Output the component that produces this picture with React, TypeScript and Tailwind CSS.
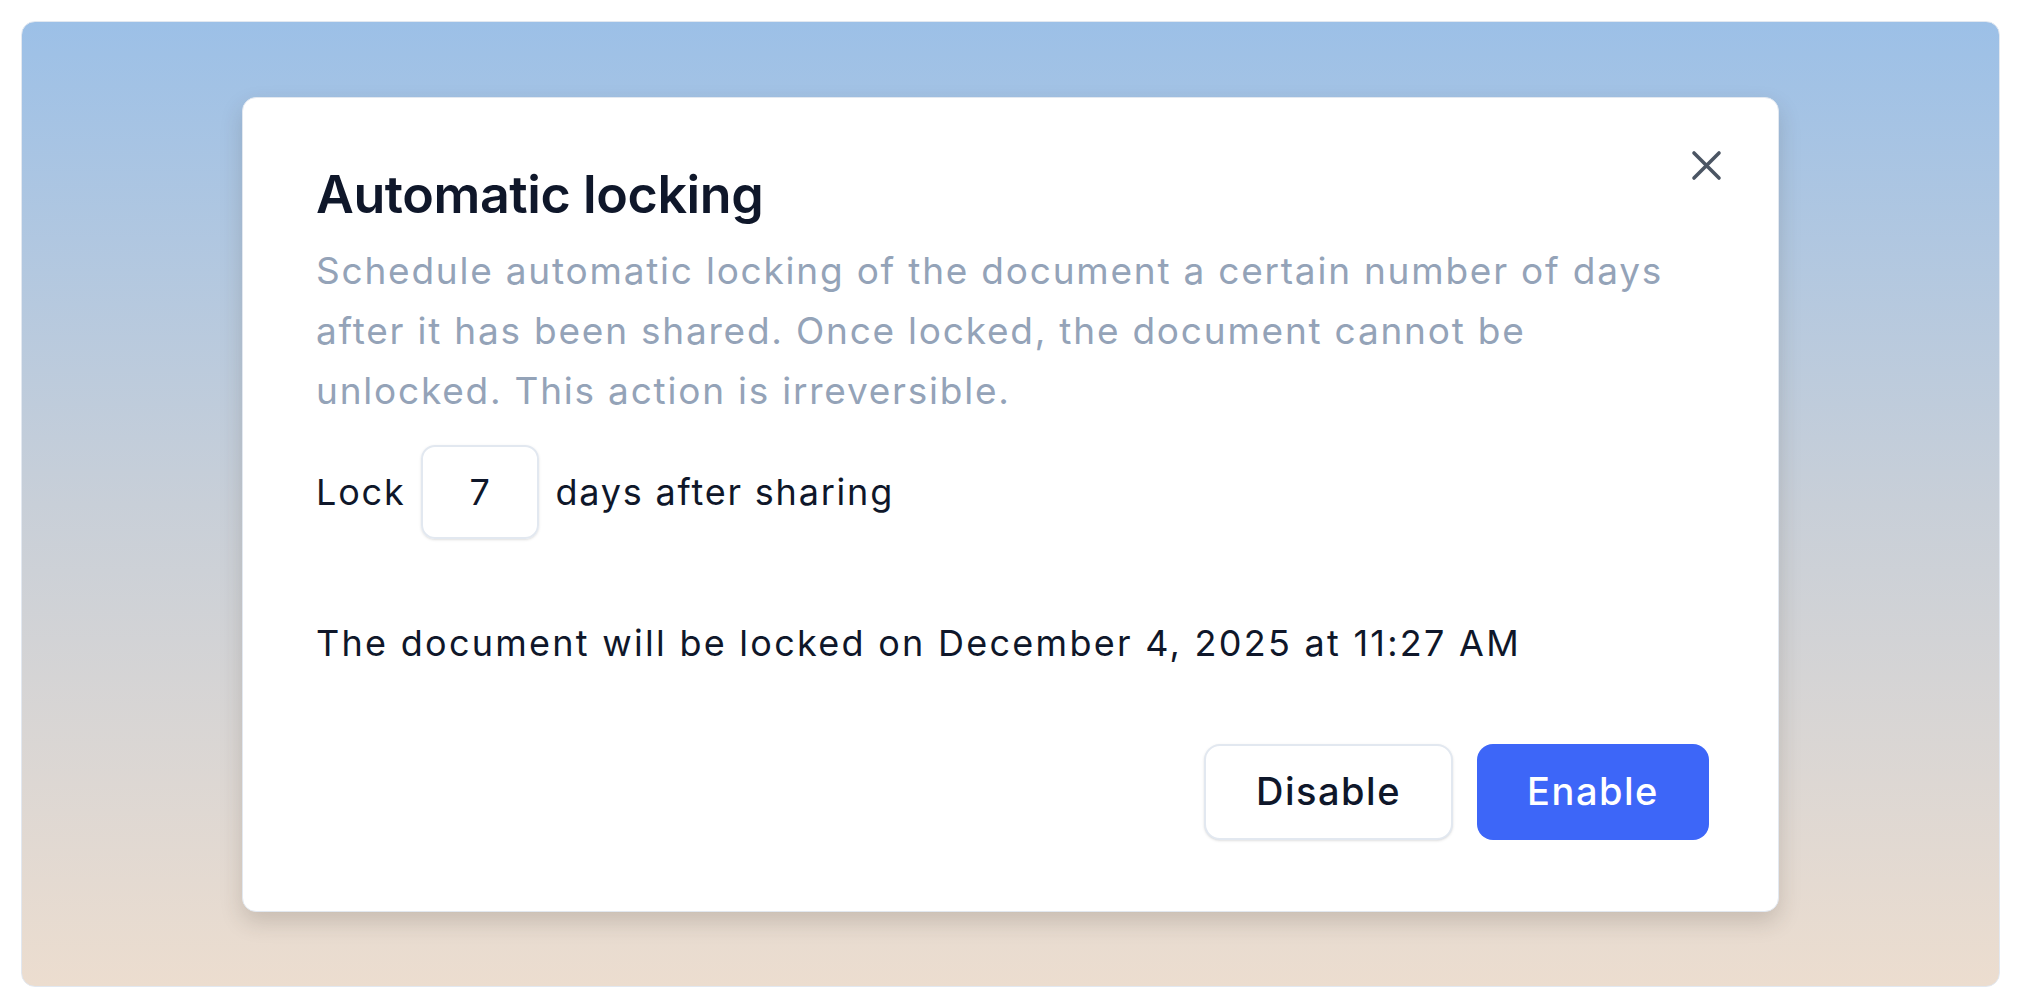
import { useState } from "react";

function CloseIcon() {
  return (
    <svg width="31" height="31" viewBox="0 0 31 31" fill="none" aria-hidden>
      <path
        d="M3 3L28 28M28 3L3 28"
        stroke="#4b5563"
        strokeWidth="3.6"
        strokeLinecap="round"
      />
    </svg>
  );
}

export default function App() {
  const [days, setDays] = useState("7");

  return (
    <div className="w-full h-[1008px] bg-white p-[21px] pr-[20px] font-['Inter','Liberation_Sans',sans-serif]">
      <div className="h-full rounded-[14px] border border-[#e2e8f0] bg-linear-to-b from-[#9cc0e7] via-[#c8cfd8] to-[#ecddcf] flex items-center justify-center">
        <div className="relative w-[1537px] bg-white rounded-[14px] border border-[#e2e8f0] shadow-[0_10px_22px_rgba(60,50,40,0.18)] pt-[67px] pb-[71px] pl-[73px] pr-[69px]">
          <button
            type="button"
            aria-label="Close"
            className="absolute top-[52px] right-[56px] flex items-center justify-center"
          >
            <CloseIcon />
          </button>

          <h2 className="text-[52px] leading-[60px] font-semibold tracking-[-0.008em] text-[#0f172a]">
            Automatic locking
          </h2>
          <p className="mt-[16px] w-[1392px] text-[37px] leading-[60px] tracking-[0.048em] text-[#94a3b8]">
            Schedule automatic locking of the document a certain number of days
            after it has been shared. Once locked, the document cannot be
            unlocked. This action is irreversible.
          </p>

          <div className="mt-[24px] flex items-center gap-[16px] text-[36px] tracking-[0.05em] text-[#0f172a]">
            <span>Lock</span>
            <input
              value={days}
              onChange={(e) => setDays(e.target.value)}
              className="w-[118px] h-[94px] rounded-[14px] border-2 border-[#e2e8f0] shadow-sm text-center text-[36px] text-[#0f172a] outline-none"
            />
            <span>days after sharing</span>
          </div>

          <p className="mt-[74px] text-[36px] leading-[60px] tracking-[0.063em] text-[#0f172a]">
            The document will be locked on December 4, 2025 at 11:27 AM
          </p>

          <div className="mt-[71px] flex justify-end gap-[24px]">
            <button
              type="button"
              className="w-[249px] h-[96px] rounded-[16px] border-2 border-[#e2e8f0] bg-white text-[38px] tracking-[0.04em] font-medium text-[#0f172a] shadow-sm"
            >
              Disable
            </button>
            <button
              type="button"
              className="w-[232px] h-[96px] rounded-[16px] bg-[#3d66f8] text-[38px] tracking-[0.04em] font-medium text-white"
            >
              Enable
            </button>
          </div>
        </div>
      </div>
    </div>
  );
}
